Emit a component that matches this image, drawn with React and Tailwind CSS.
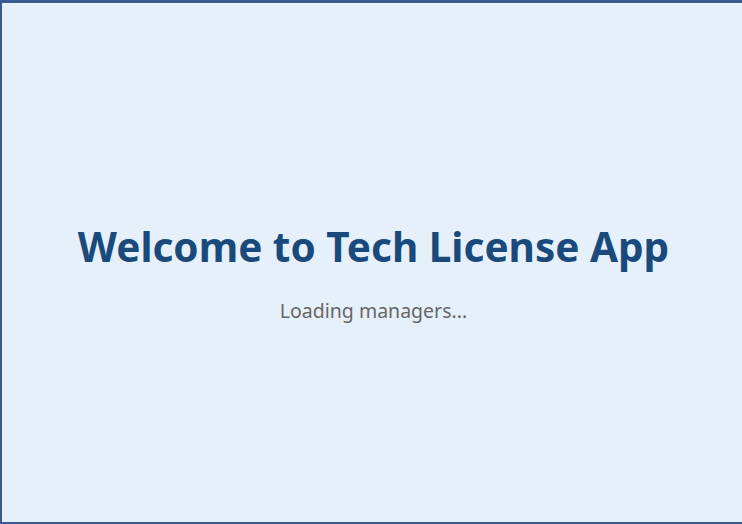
export default function App() {
  return (
    <div
      className="h-screen w-full bg-[#e6f0fa] border-t-[3px] border-l-2 border-b-2 border-[#3b5a92] flex flex-col items-center justify-center pl-[3px]"
      style={{ fontFamily: '"Noto Sans", "Open Sans", sans-serif' }}
    >
      <div className="text-center mt-[22px]">
        <h1 className="text-[40.5px] font-bold text-[#1a4a7c] leading-tight">Welcome to Tech License App</h1>
        <p className="mt-[23px] text-[19.5px] text-[#666666]">Loading managers...</p>
      </div>
    </div>
  )
}
